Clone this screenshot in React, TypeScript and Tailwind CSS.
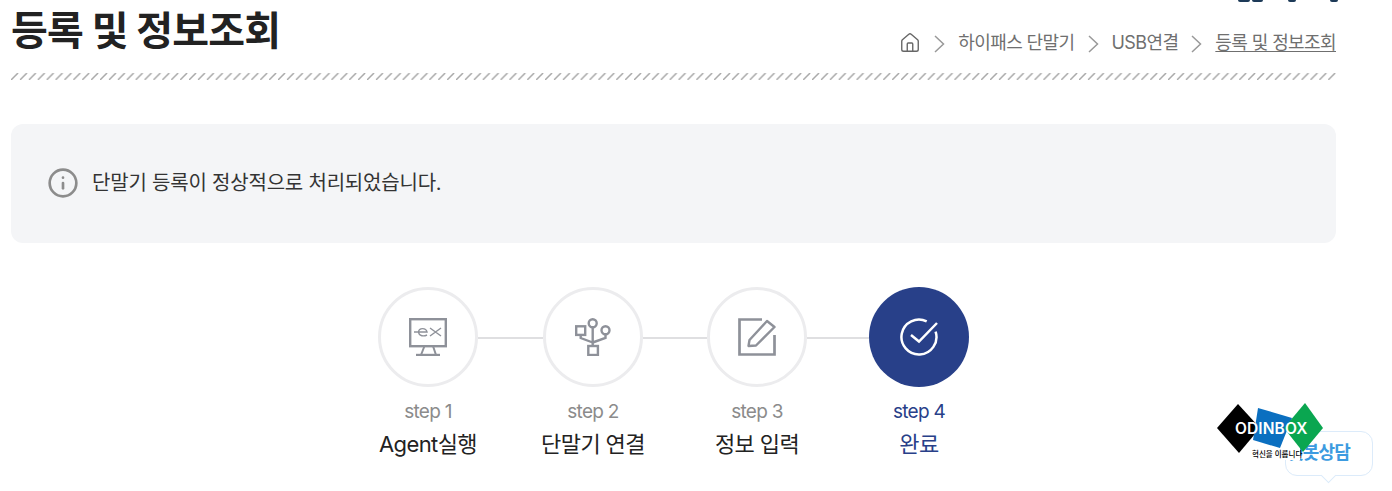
import { House, Info } from "lucide-react";
import type { ReactNode } from "react";

const sans = "font-['Inter','Noto_Sans_CJK_KR',sans-serif]";

function MonitorIcon() {
  return (
    <svg width="38" height="38" viewBox="0 0 38 38" fill="none" stroke="#8e9199" strokeWidth="2.4">
      <rect x="1.2" y="1.2" width="35.6" height="27" />
      <path d="M15.5 28 L12 37 M24 28 L27 37" strokeWidth="2" />
      <path d="M7 37 H31" />
      <path d="M5 14 H18 C17 9.5 10 9.5 9.5 14 C10 18.5 15 18.5 18 17 M21 10 L32 18 M32 10 L21 18" strokeWidth="1.4" />
    </svg>
  );
}

function UsbIcon() {
  return (
    <svg width="36" height="38" viewBox="0 0 36 38" fill="none" stroke="#8e9199" strokeWidth="2.4">
      <circle cx="17.7" cy="5.2" r="4" />
      <circle cx="30.5" cy="12.3" r="4" />
      <rect x="1.2" y="8.3" width="9" height="8.6" />
      <rect x="13.3" y="28" width="9.6" height="9" />
      <path d="M17.7 9.2 V28 M5.7 17 V20 L17.7 24.5 M30.5 16.3 V20 L17.7 24.5" />
    </svg>
  );
}

function PenIcon() {
  return (
    <svg width="38" height="38" viewBox="0 0 38 38" fill="none" stroke="#8e9199" strokeWidth="2.7">
      <path d="M24 1.5 H1.5 V36.5 H36.5 V17" />
      <path d="M10.5 28 L11.5 22 L29 3 L36.5 9 L18 27.5 Z" strokeWidth="2.4" strokeLinejoin="round" />
    </svg>
  );
}

function CheckIcon() {
  return (
    <svg width="38" height="38" viewBox="0 0 38 38" fill="none" stroke="#fff" strokeWidth="2.5">
      <path d="M35.6 13.6 A17.5 17.5 0 1 1 26.7 3.3" />
      <path d="M11 17 L19 23.5 L37 5" />
    </svg>
  );
}

function Chevron() {
  return (
    <svg width="11" height="18" viewBox="0 0 11 18" fill="none" stroke="#999" strokeWidth="1.5" className="mt-[1px]">
      <path d="M1 1 L9.5 9 L1 17" />
    </svg>
  );
}

function Step({ icon, step, name, active }: { icon: ReactNode; step: string; name: string; active?: boolean }) {
  return (
    <li className="flex w-[100px] flex-col items-center">
      <div
        className={
          active
            ? "flex h-[100px] w-[100px] items-center justify-center rounded-full bg-[#284089]"
            : "flex h-[100px] w-[100px] items-center justify-center rounded-full border-[3px] border-[#ececee] bg-white"
        }
      >
        {icon}
      </div>
      <p className={`mt-[11px] whitespace-nowrap text-[19px] leading-7 tracking-[-0.7px] ${active ? "text-[#284089]" : "text-[#8b8b8b]"}`}>
        {step}
      </p>
      <p className={`mt-[3px] whitespace-nowrap text-[22px] leading-[30px] tracking-[-0.6px] ${active ? "text-[#284089]" : "text-[#222]"}`}>
        {name}
      </p>
    </li>
  );
}

function Line({ w }: { w: string }) {
  return <li className={`mt-[50px] h-[2px] bg-[#dfdfe1] ${w}`} />;
}

export default function App() {
  return (
    <div className={`relative h-[491px] w-[1392px] overflow-hidden bg-white ${sans}`}>
      {/* tail of the line above, cut off by the crop */}
      <div className="flex h-[3px] items-start pl-[1238px]">
        <span className="h-[2px] w-[12px] rounded-b-full bg-[#1d3a58]" />
        <span className="ml-[2px] h-[2px] w-[11px] rounded-b-full bg-[#1d3a58]" />
        <span className="ml-[25px] h-[2px] w-[8px] rounded-b-full bg-[#1d3a58]" />
        <span className="ml-[34px] h-[2px] w-[8px] rounded-b-full bg-[#1d3a58]" />
      </div>

      <main className="ml-[11px] w-[1325px]">
        <header className="flex h-[70px] items-start justify-between pt-[3px]">
          <h1 className="text-[40px] font-bold leading-[50px] tracking-[-0.8px] text-[#222]">등록 및 정보조회</h1>
          <nav className="mt-[23px] flex items-center gap-[13px] text-[18px] leading-7 tracking-[-0.6px] text-[#6f6f6f]">
            <House size={22} strokeWidth={1.5} className="text-[#666]" />
            <Chevron />
            <span>하이패스 단말기</span>
            <Chevron />
            <span>USB연결</span>
            <Chevron />
            <span className="underline underline-offset-2">등록 및 정보조회</span>
          </nav>
        </header>
        <svg width="1325" height="7" className="block text-[#a9a9a9]">
          <defs>
            <pattern id="hatch" width="8.9" height="7" patternUnits="userSpaceOnUse">
              <path d="M0 7 L7 0" stroke="currentColor" strokeWidth="1.5" />
            </pattern>
          </defs>
          <rect width="1325" height="7" fill="url(#hatch)" />
        </svg>

        <section className="mt-[44px] flex h-[119px] items-center gap-[13px] rounded-xl bg-[#f4f5f7] pb-[2px] pl-[36px]">
          <Info size={32} strokeWidth={2} className="text-[#8c8c8c]" />
          <p className="text-[20px] tracking-[-0.2px] text-[#333]">단말기 등록이 정상적으로 처리되었습니다.</p>
        </section>

        <ol className="mt-[44px] ml-[367px] flex">
          <Step icon={<MonitorIcon />} step="step 1" name="Agent실행" />
          <Line w="w-[65px]" />
          <Step icon={<UsbIcon />} step="step 2" name="단말기 연결" />
          <Line w="w-[64px]" />
          <Step icon={<PenIcon />} step="step 3" name="정보 입력" />
          <Line w="w-[62px]" />
          <Step active icon={<CheckIcon />} step="step 4" name="완료" />
        </ol>
      </main>

      {/* floating logo + chat bubble */}
      <aside className="absolute left-[1217px] top-[403px] h-[88px] w-[160px]">
        <div className="absolute left-[68px] top-[28px] h-[45px] w-[88px] rounded-xl border border-[#dcebfa] bg-white" />
        <div className="absolute left-[106px] top-[67px] h-[11px] w-[11px] rotate-45 border-b border-r border-[#dcebfa] bg-white" />
        <span className="absolute left-[70px] top-[36px] text-[18px] font-bold tracking-[-0.8px] text-[#3c9be0]">챗봇상담</span>
        <svg width="107" height="58" viewBox="0 0 107 58" className="absolute left-0 top-0">
          <rect width="83" height="57" fill="#fff" />
          <polygon points="0,25 21,1 43,25 22,50" fill="#000" />
          <polygon points="41,5 75,15 63,45 36,37" fill="#0b6fc0" />
          <polygon points="67,25 88,0 106,25 86,49" fill="#0aa650" />
        </svg>
        <span className="absolute left-[18px] top-[15px] text-[15.5px] font-semibold leading-[22px] tracking-[0.1px] text-white">ODINBOX</span>
        <span className="absolute left-[35px] top-[47px] whitespace-nowrap text-[7.5px] font-medium leading-[10px] text-black">혁신을 이룹니다</span>
      </aside>
    </div>
  );
}
